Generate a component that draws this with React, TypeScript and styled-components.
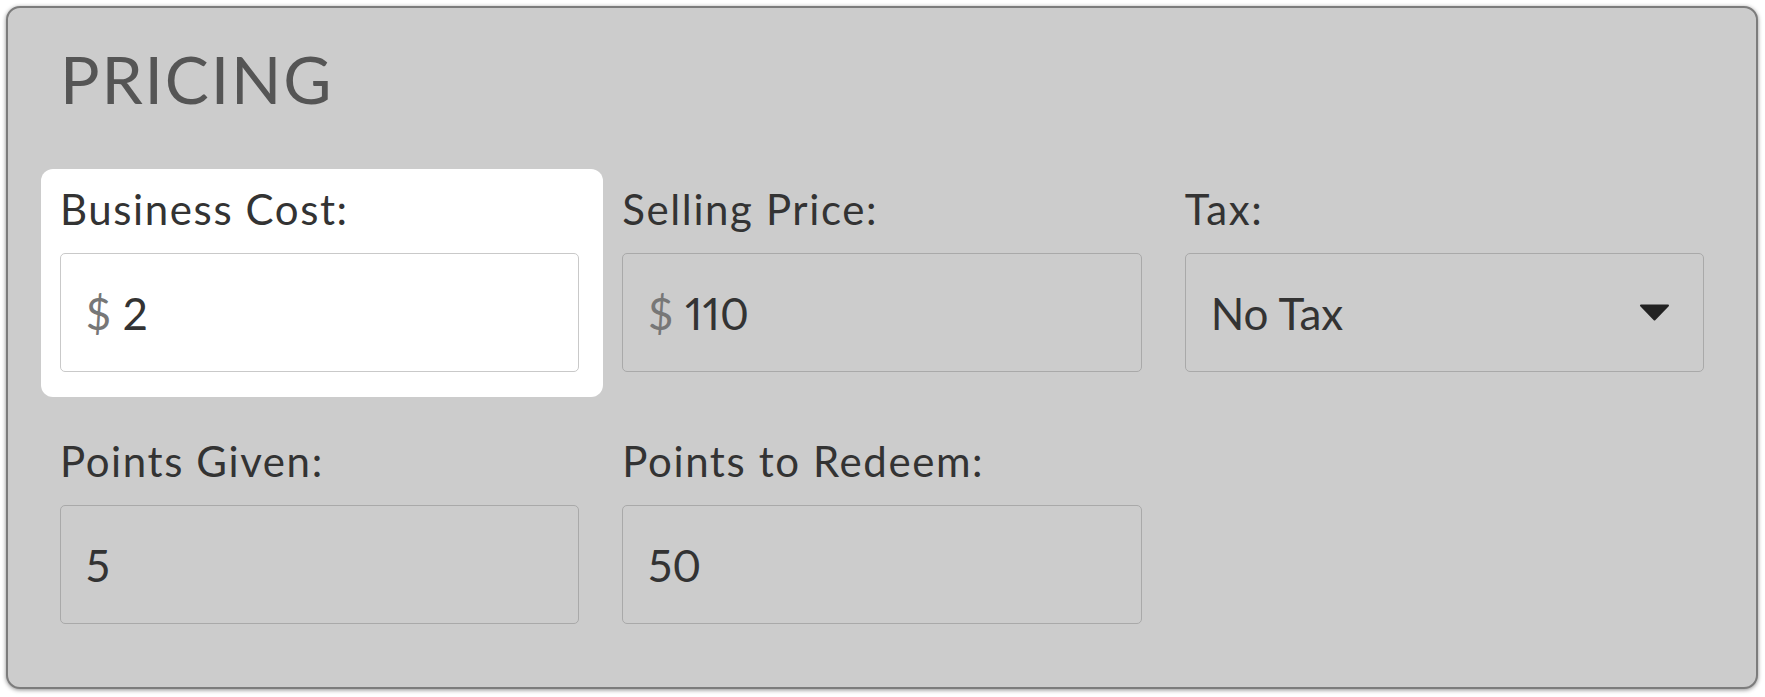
import React from "react";
import styled, { createGlobalStyle } from "styled-components";

const GlobalStyle = createGlobalStyle`
  html, body {
    margin: 0;
    padding: 0;
    background: #ffffff;
    font-family: Lato, "Liberation Sans", sans-serif;
  }
`;

const Page = styled.div`
  padding: 6px 7px 8px 6px;
`;

const Card = styled.section`
  background: #cccccc;
  border: 2px solid #7c7c7c;
  border-radius: 14px;
  box-shadow: 0 1px 4px rgba(0, 0, 0, 0.45);
  padding: 31px 52px 63px;
`;

const Title = styled.h2`
  margin: 0 0 65px;
  font-size: 66px;
  line-height: 80px;
  font-weight: 400;
  letter-spacing: 1.8px;
  color: #555555;
`;

const Grid = styled.div`
  display: grid;
  grid-template-columns: repeat(3, 1fr);
  column-gap: 43px;
  row-gap: 64px;
`;

const Field = styled.div<{ $active?: boolean }>`
  display: flex;
  flex-direction: column;
  ${({ $active }) =>
    $active &&
    `
    background: #ffffff;
    border-radius: 12px;
    padding: 15px 24px 25px 19px;
    margin: -15px -24px -25px -19px;
  `}
`;

const Label = styled.label`
  font-size: 42px;
  line-height: 50px;
  letter-spacing: 1.6px;
  color: #333333;
  margin-bottom: 19px;
`;

const InputBox = styled.div<{ $active?: boolean }>`
  box-sizing: border-box;
  height: 119px;
  display: flex;
  align-items: center;
  padding: 0 33px 0 25px;
  border: 1px solid ${({ $active }) => ($active ? "#c9c9c9" : "#a9a9a9")};
  border-radius: 5px;
  background: ${({ $active }) => ($active ? "#ffffff" : "transparent")};
  font-size: 44px;
  color: #333333;
  font-variant-numeric: proportional-nums;
`;

const Prefix = styled.span`
  color: #777777;
  margin-right: 12px;
`;

const Value = styled.span`
  flex: 1;
`;

const Caret = styled.svg`
  width: 31px;
  height: 17px;
  flex: none;
`;

type FieldDef = {
  label: string;
  value: string;
  prefix?: string;
  select?: boolean;
  active?: boolean;
};

const fields: FieldDef[] = [
  { label: "Business Cost:", value: "2", prefix: "$", active: true },
  { label: "Selling Price:", value: "110", prefix: "$" },
  { label: "Tax:", value: "No Tax", select: true },
  { label: "Points Given:", value: "5" },
  { label: "Points to Redeem:", value: "50" },
];

export default function App() {
  return (
    <Page>
      <GlobalStyle />
      <Card>
        <Title>PRICING</Title>
        <Grid>
          {fields.map((f) => (
            <Field key={f.label} $active={f.active}>
              <Label>{f.label}</Label>
              <InputBox $active={f.active}>
                {f.prefix && <Prefix>{f.prefix}</Prefix>}
                <Value>{f.value}</Value>
                {f.select && (
                  <Caret viewBox="0 0 31 17">
                    <path
                      d="M2 1.5 L29 1.5 L15.5 15.5 Z"
                      fill="#222222"
                      stroke="#222222"
                      strokeWidth="2"
                      strokeLinejoin="round"
                    />
                  </Caret>
                )}
              </InputBox>
            </Field>
          ))}
        </Grid>
      </Card>
    </Page>
  );
}
